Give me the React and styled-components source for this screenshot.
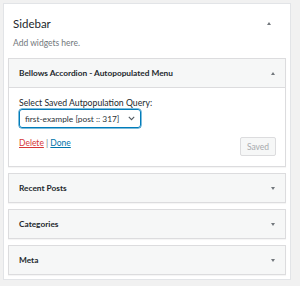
import React from 'react';
import styled, { createGlobalStyle } from 'styled-components';

const GlobalStyle = createGlobalStyle`
  html, body {
    margin: 0;
    padding: 0;
    background: #f1f1f1;
  }
  body {
    font-family: Lato, "Liberation Sans", sans-serif;
    color: #23282d;
  }
`;

const Page = styled.div`
  width: 300px;
  height: 286px;
  box-sizing: border-box;
  padding: 3px 9px 0 3px;
`;

const SidebarPanel = styled.div`
  background: #fff;
  border: 1px solid #e2e4e7;
  box-sizing: border-box;
  height: 277px;
  padding: 0 4px;
`;

const SidebarHeader = styled.div`
  display: flex;
  align-items: center;
  justify-content: space-between;
  height: 28px;
  padding: 5px 15px 0 5px;
`;

const SidebarTitle = styled.h2`
  margin: 0;
  font-size: 11.5px;
  font-weight: 400;
  color: #23282d;
`;

const Description = styled.p`
  margin: 0 0 8px 5px;
  font-size: 8.5px;
  line-height: 13px;
  color: #72777c;
`;

const WidgetList = styled.div`
  display: flex;
  flex-direction: column;
  gap: 6px;
`;

const Widget = styled.div`
  border: 1px solid #dcdcde;
  background: #fff;
  box-shadow: 0 1px 1px rgba(0, 0, 0, 0.04);
`;

const WidgetTop = styled.div`
  display: flex;
  align-items: center;
  justify-content: space-between;
  height: 28px;
  padding: 0 10px 0 10px;
  background: #f6f7f7;
  border-bottom: ${({ open }) => (open ? '1px solid #dcdcde' : 'none')};
`;

const WidgetTitle = styled.h3`
  margin: 0;
  font-size: 8.3px;
  font-weight: 700;
  color: #23282d;
`;

const Arrow = styled.span`
  width: 0;
  height: 0;
  border-left: 2.5px solid transparent;
  border-right: 2.5px solid transparent;
  ${({ up }) =>
    up
      ? 'border-bottom: 3px solid #72777c;'
      : 'border-top: 3px solid #72777c;'}
`;

const WidgetBody = styled.div`
  padding: 9px 10px 10px 10px;
`;

const FieldLabel = styled.label`
  display: block;
  font-size: 8.7px;
  line-height: 12px;
  color: #23282d;
`;

const SelectBox = styled.div`
  display: flex;
  align-items: center;
  justify-content: space-between;
  width: 122px;
  height: 19px;
  box-sizing: border-box;
  padding: 0 5px 0 5px;
  border: 1px solid #007cba;
  box-shadow: 0 0 0 0.5px #007cba;
  border-radius: 3px;
  font-size: 8.4px;
  color: #2c3338;
  white-space: nowrap;
`;

const Footer = styled.div`
  display: flex;
  justify-content: space-between;
  align-items: flex-start;
  margin-top: 9px;
`;

const Links = styled.div`
  font-size: 8.5px;
  line-height: 12px;
  color: #72777c;
`;

const Link = styled.a`
  color: ${({ danger }) => (danger ? '#d63638' : '#0073aa')};
  text-decoration: underline;
`;

const SavedButton = styled.button`
  width: 36px;
  height: 19px;
  padding: 0;
  border: 1px solid #dcdcde;
  border-radius: 2px;
  background: #f6f7f7;
  color: #a7aaad;
  font-family: inherit;
  font-size: 8.5px;
  margin-right: -1px;
`;

const Chevron = () => (
  <svg width="7" height="5" viewBox="0 0 7 5">
    <path d="M0.8 0.9 L3.5 3.6 L6.2 0.9" fill="none" stroke="#50575e" strokeWidth="1.1" />
  </svg>
);

const ClosedWidget = ({ title }) => (
  <Widget>
    <WidgetTop>
      <WidgetTitle>{title}</WidgetTitle>
      <Arrow />
    </WidgetTop>
  </Widget>
);

export default function App() {
  return (
    <Page>
      <GlobalStyle />
      <SidebarPanel>
        <SidebarHeader>
          <SidebarTitle>Sidebar</SidebarTitle>
          <Arrow up />
        </SidebarHeader>
        <Description>Add widgets here.</Description>
        <WidgetList>
          <Widget>
            <WidgetTop open>
              <WidgetTitle>Bellows Accordion - Autopopulated Menu</WidgetTitle>
              <Arrow up />
            </WidgetTop>
            <WidgetBody>
              <FieldLabel>Select Saved Autpopulation Query:</FieldLabel>
              <SelectBox>
                <span>first-example [post :: 317]</span>
                <Chevron />
              </SelectBox>
              <Footer>
                <Links>
                  <Link danger href="#">Delete</Link> | <Link href="#">Done</Link>
                </Links>
                <SavedButton disabled>Saved</SavedButton>
              </Footer>
            </WidgetBody>
          </Widget>
          <ClosedWidget title="Recent Posts" />
          <ClosedWidget title="Categories" />
          <ClosedWidget title="Meta" />
        </WidgetList>
      </SidebarPanel>
    </Page>
  );
}
